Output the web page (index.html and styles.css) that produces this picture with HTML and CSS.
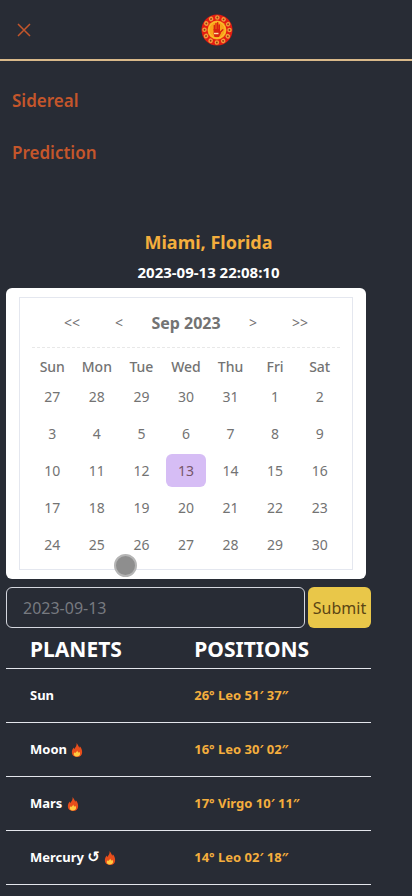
FILE: index.html
```html
<!DOCTYPE html>
<html lang="en">
<head>
<meta charset="utf-8">
<meta name="viewport" content="width=device-width, initial-scale=1">
<title>Planet positions</title>
<link rel="stylesheet" href="styles.css">
</head>
<body>
<svg width="0" height="0" class="defs" aria-hidden="true">
  <symbol id="flame" viewBox="0 0 12 15">
    <path fill="#e84e1b" d="M5.600 0C7 1.700 7.300 3 8.500 5c.3-.5.5-1 .5-1.600C10.700 5.200 11.500 7.500 11.500 9.800 11.500 13 9.500 15 6 15S.5 13 .5 10C.5 7.500 1.600 6 2.300 4.800c.1.600.3 1.100.8 1.500C4.800 4.500 5.800 2.400 5.600 0z"/>
    <path fill="#ffc940" d="M6.200 8c.4 1.400 1.200 1.800 1.800 2.400.3-.2.500-.5.600-.9C10 12 9.200 14.500 6 14.500s-4.200-2.300-2.900-4.600c.2.400.5.600.8.700C5.100 9.900 6 9.100 6.200 8z"/>
  </symbol>
</svg>
<header class="topbar">
  <button class="close" type="button" aria-label="Close menu">
    <svg width="14" height="14" viewBox="0 0 14 14"><path d="M1 1l12 12M13 1L1 13" stroke="#c4562b" stroke-width="1.500" fill="none"/></svg>
  </button>
  <a class="logo" href="#" aria-label="Home">
    <svg width="32" height="32" viewBox="0 0 32 32">
      <circle cx="16" cy="16" r="15.500" fill="#e31c12"/>
      <circle cx="16" cy="16" r="12.500" fill="none" stroke="#f39a3a" stroke-width="4.600" stroke-linecap="round" stroke-dasharray="0.010 6.535"/>
      <circle cx="16" cy="16" r="12.500" fill="none" stroke="#8f3c12" stroke-width="1.800" stroke-linecap="round" stroke-dasharray="0.010 6.535"/>
      <circle cx="16" cy="16" r="9.500" fill="#f9a31a"/>
      <circle cx="16" cy="16" r="8.300" fill="none" stroke="#fac432"/>
      <g stroke="#d9230f" stroke-width="1.400" stroke-linecap="round" fill="none">
        <path d="M13.300 16v-4.500M15 16V9.500M16.700 16V8.800M18.300 16v-5M18.500 19l3.300-3.200"/>
      </g>
      <path fill="#d9230f" d="M12.600 15H19v3.500l1 .5-2 4h-4.500l-.9-3z"/>
      <path d="M13 19.500h4.500" stroke="#fbe0a0" stroke-width="1.400"/>
    </svg>
  </a>
</header>
<nav class="menu">
  <a href="#">Sidereal</a>
  <a href="#">Prediction</a>
</nav>
<main>
  <h1>Miami, Florida</h1>
  <p class="stamp">2023-09-13 22:08:10</p>
  <section class="card" aria-label="Calendar">
    <div class="calendar">
      <div class="cal-head">
        <button type="button" aria-label="Previous year">&lt;&lt;</button>
        <button type="button" aria-label="Previous month">&lt;</button>
        <h2>Sep 2023</h2>
        <button type="button" aria-label="Next month">&gt;</button>
        <button type="button" aria-label="Next year">&gt;&gt;</button>
      </div>
      <table class="days">
        <thead><tr><th>Sun</th><th>Mon</th><th>Tue</th><th>Wed</th><th>Thu</th><th>Fri</th><th>Sat</th></tr></thead>
        <tbody>
          <tr><td><button>27</button></td><td><button>28</button></td><td><button>29</button></td><td><button>30</button></td><td><button>31</button></td><td><button>1</button></td><td><button>2</button></td></tr>
          <tr><td><button>3</button></td><td><button>4</button></td><td><button>5</button></td><td><button>6</button></td><td><button>7</button></td><td><button>8</button></td><td><button>9</button></td></tr>
          <tr><td><button>10</button></td><td><button>11</button></td><td><button>12</button></td><td><button class="selected">13</button></td><td><button>14</button></td><td><button>15</button></td><td><button>16</button></td></tr>
          <tr><td><button>17</button></td><td><button>18</button></td><td><button>19</button></td><td><button>20</button></td><td><button>21</button></td><td><button>22</button></td><td><button>23</button></td></tr>
          <tr><td><button>24</button></td><td><button>25</button></td><td><button>26</button></td><td><button>27</button></td><td><button>28</button></td><td><button>29</button></td><td><button>30</button></td></tr>
        </tbody>
      </table>
    </div>
    <span class="touch"></span>
  </section>
  <form class="date-form">
    <input type="text" placeholder="2023-09-13" aria-label="Date">
    <button type="button">Submit</button>
  </form>
  <table class="planets">
    <thead><tr><th>PLANETS</th><th>POSITIONS</th></tr></thead>
    <tbody>
      <tr><td>Sun</td><td>26° Leo 51′ 37″</td></tr>
      <tr><td>Moon <svg class="flame"><use href="#flame"/></svg></td><td>16° Leo 30′ 02″</td></tr>
      <tr><td>Mars <svg class="flame"><use href="#flame"/></svg></td><td>17° Virgo 10′ 11″</td></tr>
      <tr><td>Mercury <span class="retro">↺</span> <svg class="flame"><use href="#flame"/></svg></td><td>14° Leo 02′ 18″</td></tr>
    </tbody>
  </table>
</main>
</body>
</html>
```
FILE: styles.css
```css
* { box-sizing: border-box; }
body {
  margin: 0;
  background: #282c35;
  color: #fff;
  font-family: "Noto Sans", "Open Sans", sans-serif;
}
button, input { font: inherit; }
button { border: 0; background: none; padding: 0; color: inherit; cursor: pointer; }
h1, h2, p { margin: 0; }
.defs { position: absolute; }

.topbar {
  display: grid;
  grid-template-columns: 1fr auto 1fr;
  align-items: center;
  height: 61px;
  padding: 0 12px 0 17px;
  border-bottom: 2px solid #d9b98a;
}
.close, .logo { display: flex; }
.close { justify-self: start; }
.logo { margin-left: 16px; }

.menu {
  display: flex;
  flex-direction: column;
  gap: 28px;
  padding: 28px 12px 0;
}
.menu a {
  color: #c4562b;
  font-size: 17px;
  font-weight: 600;
  line-height: 24px;
  text-decoration: none;
}

main { padding: 65px 41px 0 6px; }
h1 {
  margin-left: 40px;
  color: #f4ae3d;
  font-size: 18px;
  line-height: 24px;
  text-align: center;
}
.stamp {
  margin: 4px 0 2px 40px;
  font-size: 15px;
  font-weight: 700;
  line-height: 28px;
  text-align: center;
}

.card {
  position: relative;
  margin-right: 5px;
  padding: 9px 13px;
  border-radius: 6px;
  background: #fff;
  color: #737373;
}
.calendar { padding: 5px 10px 6px; border: 1px solid #e4e7ef; }
.cal-head {
  display: grid;
  grid-template-columns: 60px 34px 1fr 34px 60px;
  align-items: center;
  height: 45px;
  margin: 0 2px;
  padding: 0 10px 5px;
  border-bottom: 1px dashed #e8e8e8;
  font-size: 14px;
  letter-spacing: 1px;
}
h2 { font-size: 16px; line-height: 24px; letter-spacing: normal; text-align: center; }
.days {
  width: 100%;
  margin-top: 7px;
  border-collapse: collapse;
  table-layout: fixed;
  font-size: 14px;
  text-align: center;
}
.days th { height: 23px; padding: 0; font-size: 14px; line-height: 23px; font-weight: 500; }
.days td { height: 37px; padding: 2px; }
.days button { display: block; width: 100%; height: 33px; border-radius: 6px; }
.days .selected { background: #d6bdf5; color: #765569; }
.touch {
  position: absolute;
  bottom: 2px;
  left: 108px;
  width: 23px;
  height: 23px;
  border: 2px solid #b5b5b5;
  border-radius: 50%;
  background: #8e8e8e;
}

.date-form { display: flex; gap: 3px; margin-top: 8px; }
.date-form input {
  flex: 1;
  min-width: 0;
  height: 41px;
  padding: 0 16px;
  border: 1px solid #d5d7df;
  border-radius: 6px;
  background: transparent;
  color: #fff;
  font-size: 16px;
}
.date-form input::placeholder { color: #777a80; opacity: 1; }
.date-form button {
  width: 63px;
  border-radius: 6px;
  background: #e9c749;
  color: #5b4514;
  font-size: 16px;
}

.planets {
  width: 100%;
  border-collapse: collapse;
  table-layout: fixed;
  font-size: 13px;
  font-weight: 700;
  text-align: left;
}
.planets th { height: 40px; padding: 2px 0 0 24px; font-size: 21px; line-height: 28px; }
.planets th:first-child { width: 45%; }
.planets td { height: 54px; padding: 0 0 0 24px; }
.planets tr { border-bottom: 1px solid #e4e6ec; }
.planets td:last-child { color: #f4ae3d; }
.flame { width: 12px; height: 14px; margin-left: 1px; vertical-align: -3px; }
.retro { font-family: "DejaVu Sans", sans-serif; font-size: 15px; line-height: 16px; }
```
